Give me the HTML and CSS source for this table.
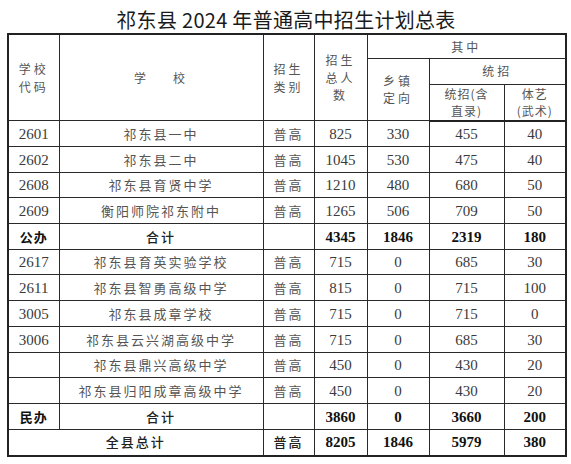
FILE: index.html
```html
<!DOCTYPE html>
<html lang="zh-CN">
<head>
<meta charset="utf-8">
<title>祁东县2024年普通高中招生计划总表</title>
<link rel="stylesheet" href="styles.css">
</head>
<body>
<div class="page">
  <h1 class="title">祁东县 2024 年普通高中招生计划总表</h1>
  <table class="plan">
    <colgroup>
      <col class="c-code"><col class="c-name"><col class="c-type"><col class="c-total"><col class="c-town"><col class="c-uni"><col class="c-art">
    </colgroup>
    <thead>
      <tr class="h1">
        <th rowspan="3" class="hd">学校<br>代码</th>
        <th rowspan="3" class="hd"><span class="gap">学</span>校</th>
        <th rowspan="3" class="hd">招生<br>类别</th>
        <th rowspan="3" class="hd">招生<br>总人<br>数</th>
        <th colspan="3" class="hd">其中</th>
      </tr>
      <tr class="h2">
        <th rowspan="2" class="hd">乡镇<br>定向</th>
        <th colspan="2" class="hd">统招</th>
      </tr>
      <tr class="h3">
        <th class="hd sm">统招(含<br>直录)</th>
        <th class="hd sm">体艺<br>(武术)</th>
      </tr>
    </thead>
    <tbody>
      <tr class="ra"><td class="num">2601</td><td class="cn">祁东县一中</td><td class="cn">普高</td><td class="num">825</td><td class="num">330</td><td class="num">455</td><td class="num">40</td></tr>
      <tr class="ra"><td class="num">2602</td><td class="cn">祁东县二中</td><td class="cn">普高</td><td class="num">1045</td><td class="num">530</td><td class="num">475</td><td class="num">40</td></tr>
      <tr class="rb"><td class="num">2608</td><td class="cn">祁东县育贤中学</td><td class="cn">普高</td><td class="num">1210</td><td class="num">480</td><td class="num">680</td><td class="num">50</td></tr>
      <tr class="ra"><td class="num">2609</td><td class="cn">衡阳师院祁东附中</td><td class="cn">普高</td><td class="num">1265</td><td class="num">506</td><td class="num">709</td><td class="num">50</td></tr>
      <tr class="ra sum"><td class="lbl">公办</td><td class="cn dark">合计</td><td></td><td class="num b">4345</td><td class="num b">1846</td><td class="num b">2319</td><td class="num b">180</td></tr>
      <tr class="rb"><td class="num">2617</td><td class="cn">祁东县育英实验学校</td><td class="cn">普高</td><td class="num">715</td><td class="num">0</td><td class="num">685</td><td class="num">30</td></tr>
      <tr class="ra"><td class="num">2611</td><td class="cn">祁东县智勇高级中学</td><td class="cn">普高</td><td class="num">815</td><td class="num">0</td><td class="num">715</td><td class="num">100</td></tr>
      <tr class="ra"><td class="num">3005</td><td class="cn">祁东县成章学校</td><td class="cn">普高</td><td class="num">715</td><td class="num">0</td><td class="num">715</td><td class="num">0</td></tr>
      <tr class="ra"><td class="num">3006</td><td class="cn">祁东县云兴湖高级中学</td><td class="cn">普高</td><td class="num">715</td><td class="num">0</td><td class="num">685</td><td class="num">30</td></tr>
      <tr class="rb"><td></td><td class="cn">祁东县鼎兴高级中学</td><td class="cn">普高</td><td class="num">450</td><td class="num">0</td><td class="num">430</td><td class="num">20</td></tr>
      <tr class="ra"><td></td><td class="cn">祁东县归阳成章高级中学</td><td class="cn">普高</td><td class="num">450</td><td class="num">0</td><td class="num">430</td><td class="num">20</td></tr>
      <tr class="ra sum"><td class="lbl">民办</td><td class="cn dark">合计</td><td></td><td class="num b">3860</td><td class="num b">0</td><td class="num b">3660</td><td class="num b">200</td></tr>
      <tr class="ra sum"><td colspan="2" class="cn dark">全县总计</td><td class="cn dark">普高</td><td class="num b">8205</td><td class="num b">1846</td><td class="num b">5979</td><td class="num b">380</td></tr>
    </tbody>
  </table>
</div>
</body>
</html>
```

FILE: styles.css
```css
html, body {
  margin: 0;
  padding: 0;
  background: #ffffff;
}

.page {
  width: 571px;
  padding: 0 0 0 7px;
  box-sizing: border-box;
}

.title {
  margin: 0;
  height: 33px;
  line-height: 40px;
  width: 558px;
  text-align: center;
  font-family: "Noto Sans CJK SC", "Noto Sans", sans-serif;
  font-size: 20px;
  font-weight: 400;
  color: #1a1a1a;
  letter-spacing: 0.3px;
}

.plan {
  border-collapse: collapse;
  table-layout: fixed;
  width: 558px;
  border: 2px solid #222;
}

.c-code { width: 51px; }
.c-name { width: 204px; }
.c-type { width: 51px; }
.c-total { width: 53px; }
.c-town { width: 62px; }
.c-uni { width: 75px; }
.c-art { width: 62px; }

.plan th,
.plan td {
  border: 1px solid #2a2a2a;
  padding: 0;
  text-align: center;
  vertical-align: middle;
  overflow: hidden;
  white-space: nowrap;
}

.hd {
  font-family: "Noto Sans CJK SC", sans-serif;
  font-weight: 400;
  font-size: 12px;
  line-height: 17.5px;
  letter-spacing: 3px;
  color: #555;
}

.sm { letter-spacing: 1px; }

.gap { margin-right: 24px; }

.h1 { height: 24px; }
.h2 { height: 26px; }
.h3 { height: 34px; }

.plan thead tr:last-child th { border-bottom: 2px solid #222; }

.plan tbody tr.ra { height: 26px; }
.plan tbody tr.rb { height: 25px; }

.num {
  font-family: "Liberation Serif", "Times New Roman", serif;
  font-size: 15px;
  line-height: 18px;
  color: #3a3a3a;
}

.num.b {
  font-weight: 700;
  color: #111;
}

.cn {
  font-family: "Noto Sans CJK SC", sans-serif;
  font-size: 13px;
  line-height: 18px;
  letter-spacing: 2px;
  color: #555;
}

.cn.dark {
  color: #222;
  font-weight: 500;
}

.lbl {
  font-family: "Noto Sans CJK SC", sans-serif;
  font-size: 13px;
  line-height: 18px;
  font-weight: 700;
  letter-spacing: 1px;
  color: #111;
}
```
